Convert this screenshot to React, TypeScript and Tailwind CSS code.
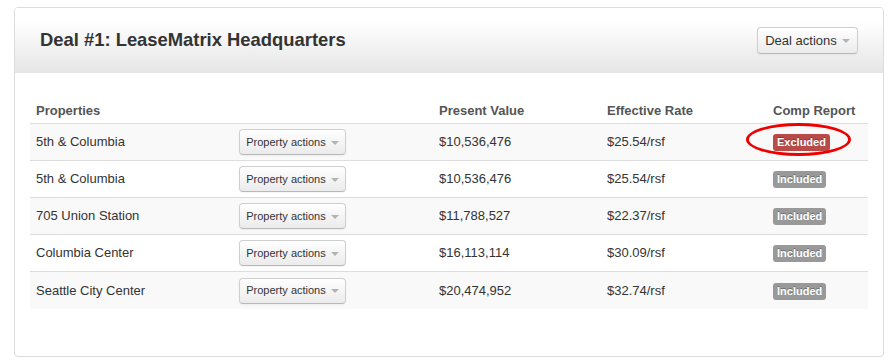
const rows = [
  { name: "5th & Columbia", value: "$10,536,476", rate: "$25.54/rsf", status: "Excluded" },
  { name: "5th & Columbia", value: "$10,536,476", rate: "$25.54/rsf", status: "Included" },
  { name: "705 Union Station", value: "$11,788,527", rate: "$22.37/rsf", status: "Included" },
  { name: "Columbia Center", value: "$16,113,114", rate: "$30.09/rsf", status: "Included" },
  { name: "Seattle City Center", value: "$20,474,952", rate: "$32.74/rsf", status: "Included" },
];

const Caret = () => (
  <span className="inline-block w-0 h-0 border-x-4 border-x-transparent border-t-4 border-t-[#b3b3b3] ml-[5px] mt-[1px]" />
);

const cols = "grid grid-cols-[203px_200px_168px_166px_101px]";

export default function App() {
  return (
    <div className="bg-white w-[893px] h-[362px] pt-[7px] pl-[14px] font-['Liberation_Sans',Arial,sans-serif] text-[#333]">
      <div className="w-[870px] h-[350px] border border-[#dcdcdc] rounded-[4px] overflow-hidden flex flex-col">
        {/* Header */}
        <div className="h-[65px] shrink-0 bg-gradient-to-b from-white from-20% to-[#e5e5e5] flex items-center justify-between pl-[25px] pr-[25px]">
          <h1 className="text-[18.4px] font-bold text-[#333] leading-none">Deal #1: LeaseMatrix Headquarters</h1>
          <button className="h-[27px] w-[101px] rounded-[4px] border border-[#cfcfcf] border-b-[#b8b8b8] bg-gradient-to-b from-white to-[#ebebeb] text-[13px] text-[#333] whitespace-nowrap flex items-center justify-center shadow-[0_1px_2px_rgba(0,0,0,0.05)]">
            Deal actions
            <Caret />
          </button>
        </div>

        {/* Body */}
        <div className="px-[15px] pt-[25px]">
          <div className={`${cols} h-[26px] items-center text-[13px] font-bold text-[#555] border-b border-[#dddddd]`}>
            <div className="pl-[6px]">Properties</div>
            <div />
            <div className="pl-[6px]">Present Value</div>
            <div className="pl-[6px]">Effective Rate</div>
            <div className="pl-[6px]">Comp Report</div>
          </div>

          {rows.map((row, i) => (
            <div
              key={i}
              className={`${cols} h-[37px] items-center text-[13px] text-[#333] ${i % 2 === 0 ? "bg-[#f9f9f9]" : "bg-white"} ${i !== rows.length - 1 ? "border-b border-[#dddddd]" : ""}`}
            >
              <div className="pl-[6px]">{row.name}</div>
              <div className="pl-[6px]">
                <button className="h-[26px] w-[107px] rounded-[4px] border border-[#cfcfcf] border-b-[#b8b8b8] bg-gradient-to-b from-white to-[#ebebeb] text-[11px] text-[#333] whitespace-nowrap flex items-center justify-center shadow-[0_1px_2px_rgba(0,0,0,0.05)]">
                  Property actions
                  <Caret />
                </button>
              </div>
              <div className="pl-[6px]">{row.value}</div>
              <div className="pl-[6px]">{row.rate}</div>
              <div className="pl-[6px]">
                <span className="relative inline-block">
                  <span
                    className={`inline-block h-[17px] px-[4px] rounded-[3px] text-[11px] font-bold leading-[17px] text-white [text-shadow:0_-1px_0_rgba(0,0,0,0.3)] ${row.status === "Excluded" ? "bg-[#b94a48]" : "bg-[#999999]"}`}
                  >
                    {row.status}
                  </span>
                  {row.status === "Excluded" && (
                    <span className="absolute left-[-27px] top-[-9px] w-[105px] h-[33px] rounded-[50%] border-[3px] border-[#ee0000]" />
                  )}
                </span>
              </div>
            </div>
          ))}
        </div>
      </div>
    </div>
  );
}
